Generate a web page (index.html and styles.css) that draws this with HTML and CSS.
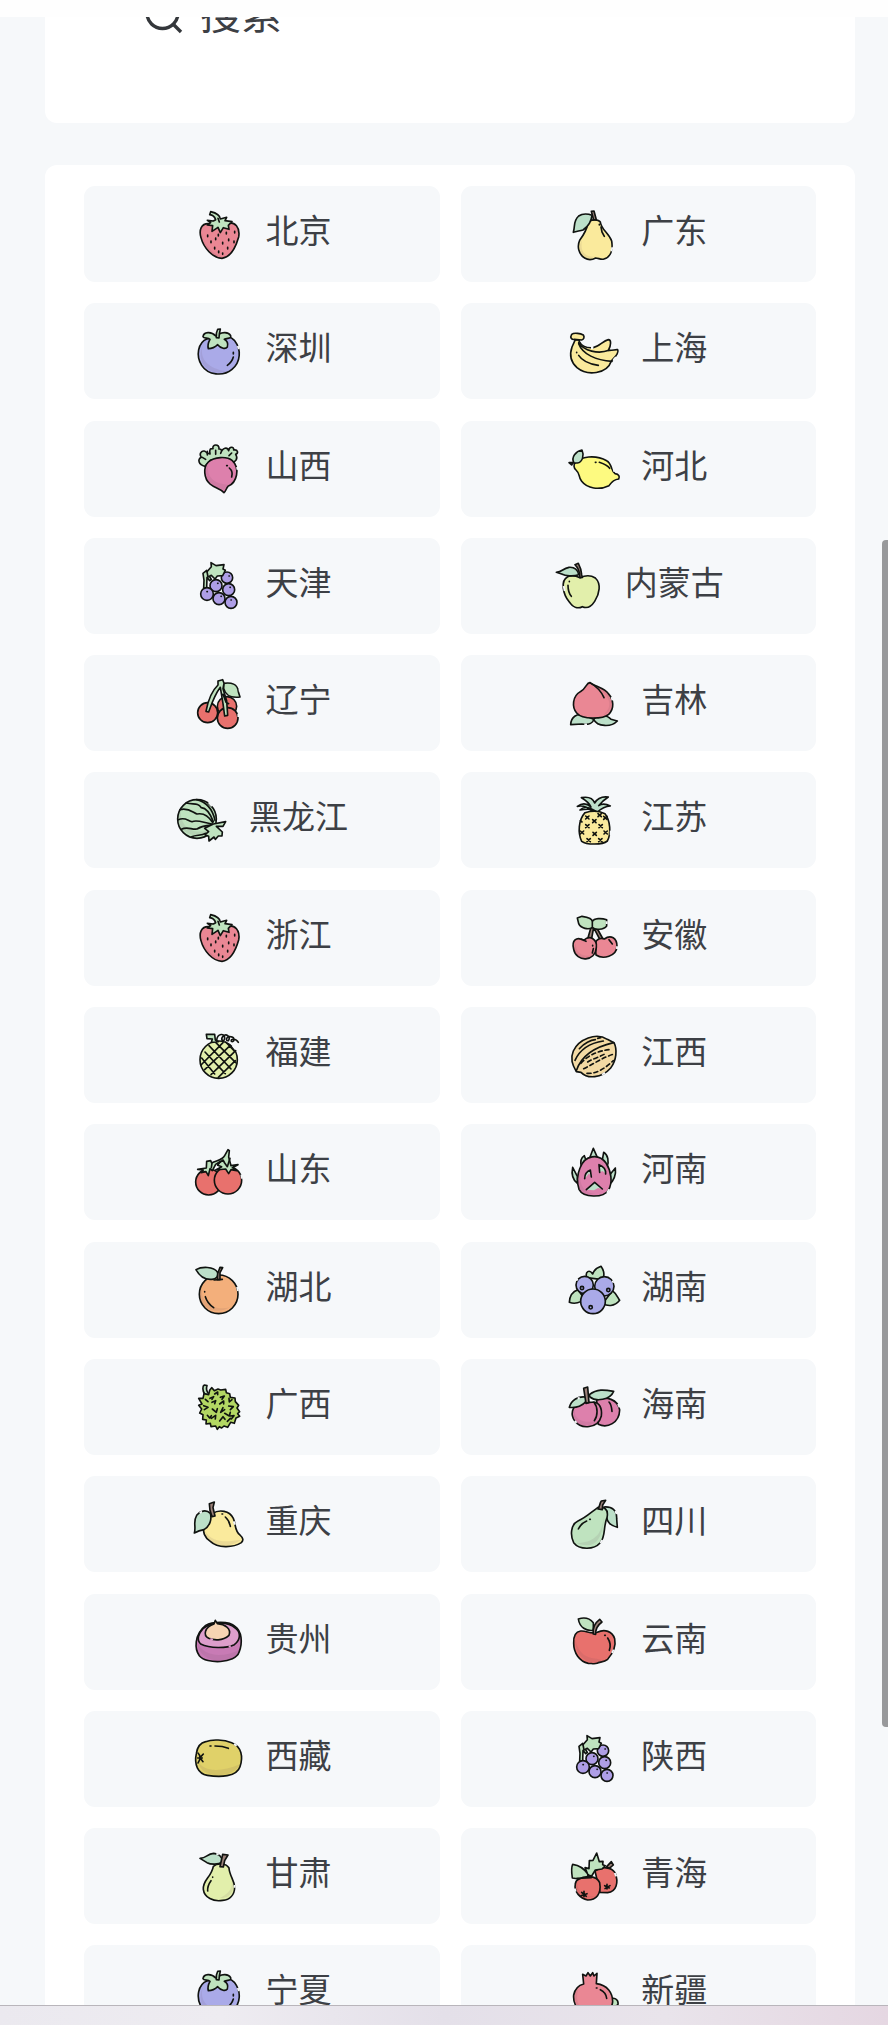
FILE: index.html
```html
<!DOCTYPE html>
<html lang="zh-CN">
<head>
<meta charset="utf-8">
<title>地区</title>
<link rel="stylesheet" href="styles.css">
</head>
<body>
<svg class="defs" aria-hidden="true">
  <symbol id="strawberry" viewBox="37 55 153 153">
    <path class="pink" d="M84 99C62 98 54 118 61 141C69 172 96 202 124 203C150 200 164 174 174 139C179 111 163 91 139 98Z"/>
    <path class="shade" stroke="none" d="M63 113C58 148 91 190 126 199C89 198 64 159 63 113Z"/>
    <path class="green" d="M80 89L98 91L105 87C102 78 96 73 87 72L90 63C107 67 118 74 119 85L138 80L133 90L154 93L143 104L145 116L128 111L119 126L112 110L94 122L96 105L80 103L90 96Z"/>
    <path d="M112 83L116 94M81 133v5M113 131v5M91 151v5M105 142v5M102 170v5M114 181v5M126 155v5M144 145v5M141 170v5M160 151v5M162 122v5M137 125v5M126 187v4"/>
  </symbol>
  <symbol id="persimmon" viewBox="37 407 153 153">
    <path class="violet" d="M80 445C51 456 45 497 63 525C82 555 128 559 154 537C181 515 182 477 162 451C150 438 132 434 111 434Z"/>
    <path class="shade" stroke="none" d="M67 463C53 506 85 537 142 543C92 562 40 519 67 463Z"/>
    <path class="green" d="M105 437C92 422 69 424 67 439C69 445 82 442 88 447C83 456 80 465 83 475C93 475 103 471 111 463C121 475 135 477 140 470C143 460 138 451 131 447C140 442 153 446 150 436C143 423 123 426 116 431L119 416L111 417C107 424 106 431 107 442L115 443L116 431"/>
    <path d="M158 486v5M158 500C155 511 150 518 140 525"/>
    <path class="gap" d="M171 467L175 476"/>
  </symbol>
  <symbol id="grapes" viewBox="67 61 153 153">
    <path class="green" d="M99 146L100 122L97 101L108 92L114 106L122 119L117 123L109 113L108 145Z"/>
    <g class="purple"><circle cx="169" cy="114" r="17"/><circle cx="136" cy="138" r="18"/><circle cx="174" cy="150" r="18"/><circle cx="109" cy="163" r="19"/><circle cx="145" cy="177" r="18"/><circle cx="181" cy="188" r="18"/></g>
    <path class="green" d="M109 96L122 81L121 69L136 78L160 75L157 88L164 92L156 108L140 109L133 118L122 107L112 112Z"/>
    <path d="M175 109h1M141 131h1M178 143h1M109 156h1M151 170h1M181 181h1"/>
  </symbol>
</svg>

<div class="screen">
  <header class="status"></header>
  <main class="view">
    <section class="panel search">
      <svg class="search-icon" viewBox="0 0 40 40"><circle cx="18.500" cy="17" r="15.500"/><path d="M29 28L37 36"/></svg>
      <span class="search-text">搜索</span>
    </section>
    <section class="panel regions">
      <a class="card"><svg class="fruit"><use href="#strawberry"/></svg><span class="name">北京</span></a>
      <a class="card"><svg class="fruit" viewBox="58 55 153 153">
        <path class="yellow" d="M115 97C121 85 146 85 152 94C155 118 177 126 186 151C190 176 184 199 163 205C154 208 146 202 138 202C129 207 116 209 105 202C86 191 82 166 90 149C102 133 111 118 115 97Z"/>
        <path class="shade" stroke="none" d="M97 149C90 187 110 200 136 198C105 213 77 181 97 149Z"/>
        <path class="mint" d="M71 125C77 105 70 91 87 76C99 68 117 70 127 74C125 92 116 107 100 118C89 121 80 122 71 125Z"/>
        <path class="brown" d="M125 62L133 61L140 87L132 88Z"/><path d="M149 101v2M154 109L157 124L164 137"/><path class="gap" d="M188 170L185 182"/>
      </svg><span class="name">广东</span></a>
      <a class="card"><svg class="fruit"><use href="#persimmon"/></svg><span class="name">深圳</span></a>
      <a class="card"><svg class="fruit" viewBox="58 407 153 153">
        <path class="yellow" d="M88 452C96 468 110 474 131 472C149 468 160 452 176 448C185 448 185 463 176 480C190 481 195 477 204 478C210 488 195 502 185 512C172 552 112 557 82 532C60 512 60 490 67 470L77 448L89 449Z"/>
        <path class="yellow" d="M66 432C74 426 93 430 101 434C105 440 103 447 96 449L74 447C64 449 61 441 66 432Z"/>
        <path d="M87 457C102 482 146 492 178 480M87 460C99 492 139 510 187 513M81 486v1M87 495C98 512 118 521 146 525"/>
        <path class="gap" d="M124 473h7M199 500L191 509"/>
      </svg><span class="name">上海</span></a>
      <a class="card"><svg class="fruit" viewBox="37 759 153 153">
        <path class="green" d="M73 829C53 825 50 808 62 802C52 787 70 776 78 788L88 792C85 774 91 776 97 776C93 762 117 760 115 777C124 776 124 784 120 790C126 772 140 770 144 782C146 767 161 770 159 780C172 778 174 789 165 793C173 805 166 816 151 819L128 811L89 811Z"/>
        <path d="M65 802L75 808M80 784L80 795M105 781L105 793M153 789L145 797"/>
        <path class="magenta" d="M83 816C100 800 139 798 155 812C179 835 169 878 142 889C137 894 136 903 130 908C119 895 101 894 88 882C69 865 67 832 83 816Z"/>
        <path class="shade" stroke="none" d="M82 826C78 861 99 882 141 884L130 899C77 886 64 856 82 826Z"/><path d="M138 827h2M146 834C154 841 156 851 153 861"/><path class="gap" d="M169 831L171 839"/>
      </svg><span class="name">山西</span></a>
      <a class="card"><svg class="fruit" viewBox="58 759 153 153">
        <path class="lemon" d="M77 818C92 800 137 793 171 812C187 820 184 843 196 851C208 852 211 860 207 867C195 868 184 878 178 887C148 901 113 896 96 874C84 859 94 854 79 840C72 834 71 824 77 818Z"/>
        <path class="mint" d="M73 819C63 801 79 784 97 780C104 795 99 817 83 819ZM58 818L70 818L66 825Z"/>
        <path d="M137 817h2M149 817C164 822 173 825 180 835"/><path class="gap" d="M191 832L194 845"/>
      </svg><span class="name">河北</span></a>
      <a class="card"><svg class="fruit"><use href="#grapes"/></svg><span class="name">天津</span></a>
      <a class="card"><svg class="fruit" viewBox="24 61 153 153">
        <path class="lime" d="M68 111C80 105 91 107 105 114C122 106 139 107 151 115C169 132 164 162 149 185C138 202 125 207 112 201C98 209 83 202 73 187C53 163 46 123 68 111Z"/>
        <path class="mint" d="M34 98C53 96 52 87 72 83C87 82 98 90 101 105C85 111 61 109 50 103Z"/>
        <path class="brown" d="M90 75L100 71C106 82 109 92 110 105L112 113L105 114C104 97 99 84 90 75Z"/><path d="M73 125v1M69 137C69 150 72 162 79 170"/><path class="gap" d="M56 139L59 154"/>
      </svg><span class="name">内蒙古</span></a>
      <a class="card"><svg class="fruit" viewBox="67 413 153 153">
        <g class="red"><circle cx="169" cy="498" r="29"/><circle cx="111" cy="517" r="30"/><circle cx="171" cy="533" r="31"/></g>
        <path class="green" d="M159 429C182 426 201 430 203 454L208 470C187 473 165 467 159 444Z"/>
        <path class="green" d="M142 422L156 418L160 429L157 445L168 481L171 525L162 527L157 490L149 441C132 463 123 490 114 515L106 513C112 481 125 450 142 434ZM157 462L166 486L174 490"/>
        <path class="gap" d="M203 520L203 530M207 446v7"/>
      </svg><span class="name">辽宁</span></a>
      <a class="card"><svg class="fruit" viewBox="73 413 153 153">
        <path class="mint" d="M78 553C79 530 96 518 118 525L147 537C145 548 132 554 112 551ZM147 537C160 522 188 523 199 537L218 542C200 561 158 560 147 537Z"/>
        <path class="pink" d="M136 427C124 427 127 443 107 454C83 468 81 500 96 518C114 539 175 536 192 522C210 504 207 478 191 460C182 444 148 437 136 427Z"/>
        <path class="shade" stroke="none" d="M158 438C199 474 206 499 174 526C215 510 205 456 158 438Z"/><path d="M136 427C155 438 170 454 178 472"/><path class="gap" d="M201 470L203 480M119 552h8"/>
      </svg><span class="name">吉林</span></a>
      <a class="card"><svg class="fruit" viewBox="18 764 153 153">
        <circle class="green" cx="81" cy="836" r="58"/><path class="shade" stroke="none" d="M32 808C31 870 77 885 126 866C73 910 6 870 32 808Z"/>
        <path d="M49 788C71 794 82 785 94 802C108 803 120 818 130 844M80 778C104 784 127 803 135 840M30 808C55 801 68 816 81 821C100 817 117 829 128 847M25 838C44 830 50 839 66 844C84 837 101 848 126 851M34 867C53 857 65 869 81 866C99 854 111 856 125 854M65 889C79 883 96 886 106 879"/>
        <path class="green" d="M130 851L167 844L159 858L139 858L157 875L156 887L145 887L136 897L132 890L117 902L116 888L105 883L116 874L104 864Z"/><path class="gap" d="M116 786L126 797"/>
      </svg><span class="name">黑龙江</span></a>
      <a class="card"><svg class="fruit" viewBox="73 764 153 153">
        <path class="mint" d="M147 816C132 803 119 794 98 798C112 788 127 789 139 800C132 785 120 778 110 772C131 768 145 775 150 788C159 772 175 768 191 770C180 777 169 787 162 796C174 788 187 792 197 797C181 798 170 804 158 815L145 808C133 806 116 807 106 809C116 798 132 800 145 808Z"/>
        <path class="yellow" d="M121 817C142 811 164 812 181 820C197 840 200 880 188 902C173 914 126 914 111 903C99 878 101 839 121 817Z"/>
        <path d="M123 827l10 9m0-9l-10 9M160 820l10 9m0-9l-10 9M144 838l10 9m0-9l-10 9M177 828l10 9m0-9l-10 9M123 853l10 9m0-9l-10 9M163 853l10 9m0-9l-10 9M145 876l10 9m0-9l-10 9M107 872l10 9m0-9l-10 9M178 872l10 9m0-9l-10 9M127 895l10 9m0-9l-10 9M162 895l10 9m0-9l-10 9M107 841l5 4"/><path class="gap" d="M198 871L198 885"/>
      </svg><span class="name">江苏</span></a>
      <a class="card"><svg class="fruit"><use href="#strawberry"/></svg><span class="name">浙江</span></a>
      <a class="card"><svg class="fruit" viewBox="58 51 153 153">
        <path class="brown" d="M124 97L132 97L126 130L121 141L112 139ZM132 98L140 96L160 132L153 138Z"/>
        <path class="pink" d="M136 146C141 128 158 129 164 132C184 117 202 130 202 154C201 185 159 194 139 180Z"/>
        <path class="pink" d="M102 136C122 118 143 134 140 157C138 201 80 203 72 163C65 137 80 123 102 136ZM95 132L109 139"/>
        <path class="shade" stroke="none" d="M78 145C79 183 109 186 133 179C103 209 61 176 78 145Z"/>
        <path class="green" d="M128 97C117 106 93 100 87 86L83 69L97 64C118 67 128 72 128 80C133 69 155 69 171 74L171 93C162 105 135 106 128 97ZM128 80v17"/><path d="M129 151v2M131 161L128 174M178 134L188 147"/><path class="gap" d="M171 79v8M202 154v8"/>
      </svg><span class="name">安徽</span></a>
      <a class="card"><svg class="fruit" viewBox="37 403 153 153">
        <circle class="lime" cx="114" cy="492" r="56"/>
        <path d="M73 469L134 534M85 450L151 520M105 440L165 501M135 439L163 468M63 487L102 535M61 508L127 441M72 522L149 449M91 537L165 465M113 545L164 495"/>
        <path class="green" d="M77 416L102 416L104 433L113 438L92 440L95 430L79 429Z"/><path fill="none" d="M108 434C110 412 133 412 132 427C130 444 118 433 127 422C137 411 151 424 143 435C134 438 136 420 149 423C166 425 160 442 152 437C149 428 166 428 173 440"/><path class="gap" d="M156 450L165 461"/>
      </svg><span class="name">福建</span></a>
      <a class="card"><svg class="fruit" viewBox="58 403 153 153">
        <path class="tan" d="M71 466C87 430 140 409 173 431L193 441C203 461 201 493 183 517C155 549 113 550 94 530L80 528C68 507 61 489 71 466Z"/>
        <path fill="none" d="M80 525C96 477 139 453 192 441M76 494C91 461 121 442 161 436M89 459C103 442 124 433 137 432M144 428L153 426"/>
        <path class="dash" fill="none" d="M94 503C115 479 143 465 186 461M102 519C132 505 160 485 190 476M112 533C143 536 173 512 191 495M114 499C130 489 150 484 165 475"/><path class="gap" d="M157 537L166 531"/>
      </svg><span class="name">江西</span></a>
      <a class="card"><svg class="fruit" viewBox="37 755 153 153">
        <circle class="red" cx="84" cy="860" r="39"/><circle class="red" cx="142" cy="855" r="41"/>
        <path class="green" d="M77 818L78 798L90 796L93 803C110 795 126 794 132 781L142 763L146 766L144 785L151 811L172 808L155 817L168 826L151 823L144 835L135 821L105 824L123 814L111 810L119 798L105 807L95 826L88 820L83 841L76 829L61 832L68 824L51 822Z"/>
        <path fill="none" d="M94 804L92 817M111 806L127 794L132 803L140 814L148 789"/><path class="gap" d="M182 838L184 850"/>
      </svg><span class="name">山东</span></a>
      <a class="card"><svg class="fruit" viewBox="58 755 153 153">
        <path class="mint" d="M83 843L69 816C64 839 71 855 84 865ZM95 814C91 798 96 786 104 781L112 803ZM120 788L131 759L143 786ZM158 794L162 771C175 778 179 800 172 815ZM178 841L197 818C200 838 192 857 180 866Z"/>
        <path class="magenta" d="M91 818C105 779 147 773 169 803C185 828 190 861 176 885C161 908 101 908 88 882C80 857 83 837 91 818Z"/>
        <path class="shade" stroke="none" d="M92 824C87 863 99 894 137 895C87 905 76 861 92 824Z"/>
        <path class="mint" stroke="none" d="M105 850C105 837 112 828 122 824L125 845L118 834ZM148 826L148 808C162 813 169 824 168 836L159 827L150 831ZM110 883L135 861L158 881L145 878L133 885Z"/>
        <path fill="none" d="M105 850C105 837 112 828 122 824L125 845M150 831L148 808C162 813 169 824 168 836M110 883L135 861L158 881"/><path class="gap" d="M172 892L179 882"/>
      </svg><span class="name">河南</span></a>
      <a class="card"><svg class="fruit" viewBox="37 57 153 153">
        <circle class="orange" cx="114" cy="148" r="58"/><path class="shade" stroke="none" d="M64 132C59 175 103 198 148 187C92 219 38 171 64 132Z"/>
        <path class="mint" d="M46 74C63 64 99 64 110 81C115 94 106 102 94 103C76 105 59 98 46 74Z"/><path class="brown" d="M126 68L118 83L118 104L110 104L111 86L118 67Z"/><path d="M100 105L125 103M72 140v1M74 155C79 171 86 179 99 188"/><path class="gap" d="M169 126L172 138"/>
      </svg><span class="name">湖北</span></a>
      <a class="card"><svg class="fruit" viewBox="58 57 153 153">
        <path class="green" d="M111 98C106 79 119 72 129 87C133 75 142 68 154 64C164 78 164 94 158 104ZM85 134C69 139 60 152 59 172C75 178 94 174 103 160ZM188 137C204 149 205 160 210 166C194 186 172 184 160 175Z"/>
        <g class="violet"><circle cx="105" cy="120" r="26"/><circle cx="164" cy="124" r="29"/><circle cx="130" cy="169" r="37"/></g>
        <g class="violet"><circle cx="97" cy="129" r="5"/><circle cx="176" cy="135" r="5"/><circle cx="123" cy="187" r="5"/></g><path class="gap" d="M80 107L84 101M188 107L192 113"/>
      </svg><span class="name">湖南</span></a>
      <a class="card"><svg class="fruit" viewBox="37 409 153 153">
        <path class="green" d="M72 448C65 438 65 424 71 421L79 423C76 431 78 440 84 447L79 454Z"/>
        <path class="spring" d="M87 437L93 429L101 438L112 433L120 436L135 434L137 444L147 447L149 458L163 460L164 471L174 482L169 490L177 501L171 507L177 515L166 520L161 536L150 533L141 548L130 544L123 550L116 546L110 554L105 544L91 546L89 536L76 538L77 526L66 524L67 510L57 505L63 493L54 482L64 478L54 461L67 461L70 447L84 450Z"/>
        <path fill="none" d="M88 461l11-5-5 8M102 448l9-6v8M119 458l12-4-7 10M94 473l11-5-3 9M117 478l12-9v9M69 483l13 5-11 7M95 493l12 10 3-11M127 489l-7 14 12-8M144 484l14 2-9 9M145 461l1 11 8-7M92 521l13-9-1 11M117 529l10-13 6 8M132 506l14 8 3-11M149 514l11-1-8 10M80 512l7 8 5-7M82 471l-8-7M140 530l9-9"/>
      </svg><span class="name">广西</span></a>
      <a class="card"><svg class="fruit" viewBox="58 409 153 153">
        <path class="magenta" d="M141 466C169 453 205 464 210 496C209 535 173 552 146 539Z"/><path class="magenta" d="M88 477C106 470 122 475 132 472C149 474 158 490 155 514C145 553 94 554 76 530C61 511 67 484 88 477Z"/>
        <path class="shade" stroke="none" d="M74 495C75 530 106 535 143 529C100 560 64 534 74 495Z"/>
        <path class="mint" d="M59 488C65 466 86 454 107 457L113 466C97 485 83 490 59 488ZM119 450C142 432 164 435 192 440C181 466 139 472 121 457Z"/><path class="brown" d="M102 431L114 427L118 474L109 476Z"/><path fill="none" d="M133 473C145 488 145 513 134 528M178 472C185 479 186 488 187 500"/><path class="gap" d="M205 478L210 488M75 529l6 5M84 462l6-3"/>
      </svg><span class="name">海南</span></a>
      <a class="card"><svg class="fruit" viewBox="37 761 153 153">
        <path class="yellow" d="M95 805C116 791 147 796 158 819C165 835 162 858 178 869C188 878 189 885 182 892C157 908 111 909 89 888C65 872 69 854 68 841Z"/>
        <path class="shade" stroke="none" d="M73 857C100 899 145 887 181 884C143 912 75 902 73 857Z"/><path class="mint" d="M41 863C47 843 36 830 48 810C58 797 76 791 89 804C94 822 88 842 70 853C57 855 50 858 41 863Z"/><path class="brown" d="M86 775L101 770L97 787L103 812L94 814C88 800 86 789 86 775Z"/><path d="M124 806h2M134 815C142 822 147 832 149 843"/><path class="gap" d="M57 803l7-4M159 828l4 10"/>
      </svg><span class="name">重庆</span></a>
      <a class="card"><svg class="fruit" viewBox="58 761 153 153">
        <path class="mint" d="M163 785C187 783 202 795 201 820L203 846C188 842 173 833 171 816Z"/><path class="green" d="M145 786C124 801 107 818 85 827C63 837 61 870 72 892C89 914 133 914 151 893C169 875 160 845 172 817C178 789 161 784 145 786Z"/>
        <path class="shade" stroke="none" d="M164 805C158 861 143 889 82 894C144 916 159 875 164 805Z"/><path class="brown" d="M145 791C151 783 149 775 155 767L168 765L159 779L158 793Z"/><path d="M120 822h2M111 827C99 832 91 841 86 851"/><path class="gap" d="M197 797l4 9M158 884l-6 9"/>
      </svg><span class="name">四川</span></a>
      <a class="card"><svg class="fruit" viewBox="37 63 153 153">
        <path class="plum" d="M75 91C93 80 145 76 163 94C183 107 187 143 175 172C165 205 77 209 56 182C42 163 39 120 75 91Z"/><path class="shade" stroke="none" d="M50 145C71 184 122 190 178 164C162 209 57 212 50 145Z"/>
        <path class="orchid" d="M67 101C89 82 139 76 165 100C180 111 181 134 161 149C138 160 88 161 60 147C47 135 53 116 67 101Z"/><path class="peach" d="M100 87L104 76L110 86C132 88 153 100 145 121C125 139 99 136 84 130C66 120 72 97 100 87Z"/><path class="gap orchid-gap" d="M89 132l8 2M144 155l6-2"/>
      </svg><span class="name">贵州</span></a>
      <a class="card"><svg class="fruit" viewBox="58 63 153 153">
        <path class="red" d="M93 108C111 106 122 119 143 112C165 101 188 109 195 131C200 155 187 178 174 193C162 203 150 200 142 205C133 208 125 205 116 205C89 199 72 174 72 145C71 122 78 110 93 108Z"/><path class="shade" stroke="none" d="M77 133C86 178 112 190 142 191L167 199C124 218 73 186 77 133Z"/>
        <path class="green" d="M86 72C104 66 121 71 131 83L131 106C110 109 90 98 86 72Z"/><path class="brown" d="M131 117C128 98 138 82 150 73L157 81C143 91 137 102 138 118Z"/><path fill="none" d="M165 121h2M174 129C182 141 184 153 179 166"/><path class="gap" d="M192 164l-5 10"/>
      </svg><span class="name">云南</span></a>
      <a class="card"><svg class="fruit" viewBox="37 415 153 153">
        <path class="olive" d="M75 441C94 433 130 435 153 444C183 455 188 488 178 516C168 547 118 548 80 542C51 537 40 509 47 477C50 456 60 444 75 441Z"/><path class="shade" stroke="none" d="M52 500C69 532 120 533 178 509C166 548 60 560 52 500Z"/>
        <path fill="none" d="M52 475C61 484 61 492 52 505M68 478L58 489L67 501M51 490H65M88 454h3M103 454C119 454 131 456 143 461"/><path class="gap" d="M160 448l8 5"/>
      </svg><span class="name">西藏</span></a>
      <a class="card"><svg class="fruit"><use href="#grapes"/></svg><span class="name">陕西</span></a>
      <a class="card"><svg class="fruit" viewBox="37 767 153 153">
        <path class="lime" d="M98 813C110 802 137 804 145 818C146 839 160 854 162 874C162 899 147 913 126 915C98 920 71 907 68 882C66 853 91 848 98 813Z"/><path class="shade" stroke="none" d="M148 835C163 876 147 893 117 908C154 911 170 875 148 835Z"/>
        <path class="mint" d="M58 789C79 788 78 776 99 774C115 775 126 786 125 800C113 808 91 808 79 802Z"/><path class="brown" d="M118 814L123 791L126 777L142 779L132 796L128 815Z"/><path d="M96 845v1M91 856C83 867 80 875 81 887"/><path class="gap" d="M107 775l7 3M162 869v8"/>
      </svg><span class="name">甘肃</span></a>
      <a class="card"><svg class="fruit" viewBox="58 767 153 153">
        <path class="brown" d="M171 814L185 799L191 809L178 820Z"/><path class="red" d="M136 827C156 812 185 815 196 832C208 861 200 889 174 892L151 891Z"/>
        <path class="green" d="M68 848C65 828 65 815 69 807C93 810 105 821 116 838L108 854ZM115 839L106 817L118 820L119 796L130 795L141 773L149 799L160 798L159 808L167 811L157 821L137 824L126 842Z"/>
        <path class="red" d="M87 852C106 839 141 840 150 862C156 897 139 914 114 914C92 909 72 890 77 866C78 857 82 854 87 852Z"/><path class="shade" stroke="none" d="M83 862C84 897 113 903 135 903C97 918 69 887 83 862Z"/><path d="M103 888v16M96 891l14 12M94 901l18-6M172 867v14M165 871l14 7M166 880l15-9M82 849L125 847"/><path class="gap" d="M195 833l5 10M75 880l3 9"/>
      </svg><span class="name">青海</span></a>
      <a class="card"><svg class="fruit"><use href="#persimmon"/></svg><span class="name">宁夏</span></a>
      <a class="card"><svg class="fruit" viewBox="0 0 153 153">
        <path class="green" d="M119 95C135 85 149 94 147 109L134 122L120 117Z"/><path class="pink" d="M44 48L41 19L51 24L57 14L64 24L71 14L75 24L84 16L82 47C116 51 131 76 131 101C127 137 91 147 56 139C23 129 12 105 14 81C18 62 28 52 44 48Z"/><path class="shade" stroke="none" d="M28 63C17 98 30 122 58 137C16 130 3 86 28 63Z"/><path d="M82 60h2M94 65C106 71 112 80 113 91"/>
      </svg><span class="name">新疆</span></a>
    </section>
    <i class="scrollbar"></i>
  </main>
  <footer class="dock"></footer>
</div>
</body>
</html>
```

FILE: styles.css
```css
* { box-sizing: border-box; }
body { margin: 0; font-family: "Noto Sans CJK SC", sans-serif; color: #3d4045; }
.defs { position: absolute; width: 0; height: 0; }
.screen { display: flex; flex-direction: column; width: 888px; height: 2025px; overflow: hidden; background: #fff; }
.status { flex: 0 0 17px; background: #fefefe; }
.view { position: relative; flex: 1; min-height: 0; overflow: hidden; padding: 0 33px 0 45px; background: #f6f8fa; }
.panel { background: #fff; border-radius: 12px; }
.search { display: flex; height: 129px; margin-top: -23px; padding: 2px 0 0 99px; border-radius: 0 0 12px 12px; }
.search-icon { width: 40px; height: 40px; fill: none; stroke: #34373b; stroke-width: 3.4; }
.search-text { margin: -5px 0 0 16px; font-size: 41px; line-height: 40px; }
.regions { display: grid; grid-template-columns: 356px 355px; grid-auto-rows: 96px; gap: 21.3px; margin-top: 42px; padding: 21px 38px 21px 39px; }
.card { display: flex; align-items: center; justify-content: center; gap: 22px; border-radius: 11px; background: #f6f8fa; }
.card:nth-child(even) { gap: 21px; padding-right: 1px; }
.name { font-size: 33px; line-height: 40px; padding-bottom: 10px; }
.fruit { width: 51px; height: 51px; overflow: visible; }
.fruit, .defs { fill: none; stroke: #101310; stroke-width: 4.9; stroke-linecap: round; stroke-linejoin: round; }
.pink { fill: #ea8794; }
.green { fill: #bfe3bf; }
.mint { fill: #bce0c9; }
.violet { fill: #aaaae8; }
.purple { fill: #ae9ee6; }
.magenta { fill: #dd80ac; }
.yellow { fill: #faea9c; }
.lemon { fill: #fdfa80; }
.lime { fill: #e2efab; }
.spring { fill: #b3d763; }
.red { fill: #e8716d; }
.orange { fill: #f3af7b; }
.tan { fill: #f3daa4; }
.olive { fill: #e0d169; }
.brown { fill: #9b8179; }
.plum { fill: #c87bb5; }
.orchid { fill: #dd9ecb; }
.peach { fill: #f6d4b3; }
.shade { fill: rgba(100, 65, 90, .1); }
.gap { stroke: #f6f8fa; stroke-width: 5.6; stroke-linecap: butt; }
.orchid-gap { stroke: #dd9ecb; }
.dash { stroke-dasharray: 12 9; }
.scrollbar { position: absolute; right: 0; top: 523px; width: 6px; height: 1187px; border-radius: 4px 0 0 4px; background: #98999b; }
.dock { flex: 0 0 20px; border-top: 1px solid #b9b5bb; background: linear-gradient(90deg, #ebe9ef 0%, #eeecf1 25%, #e4e0e9 50%, #e9e4eb 75%, #e5d7e2 100%); }
```
